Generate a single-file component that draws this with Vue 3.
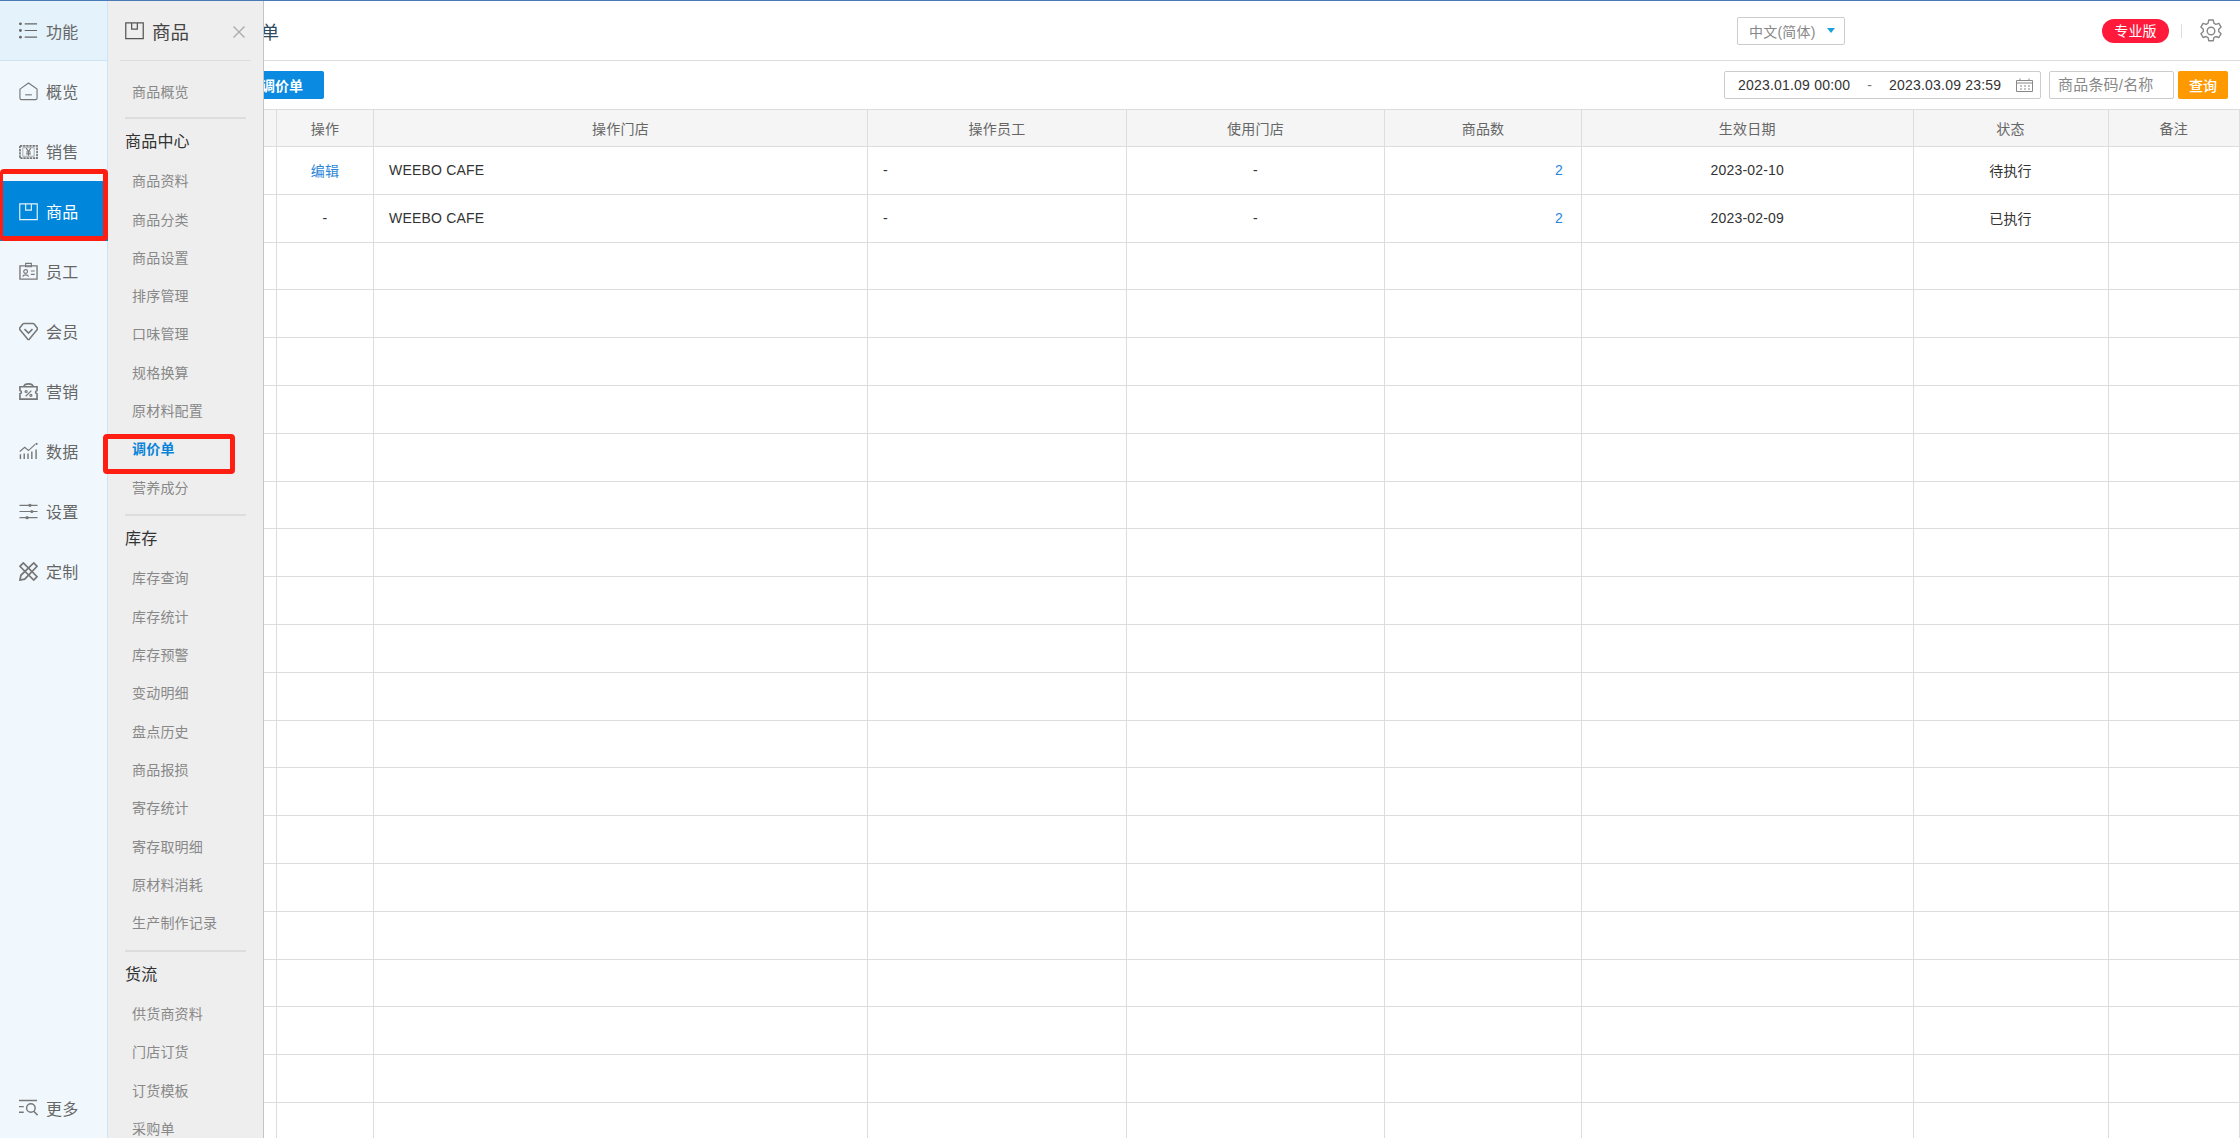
<script setup>
const navItems = [
  { label: '概览', icon: 'home' },
  { label: '销售', icon: 'money' },
  { label: '商品', icon: 'box', active: true },
  { label: '员工', icon: 'card' },
  { label: '会员', icon: 'gem' },
  { label: '营销', icon: 'ticket' },
  { label: '数据', icon: 'chart' },
  { label: '设置', icon: 'sliders' },
  { label: '定制', icon: 'tools' },
]
const sections = [
  { items: ['商品概览'] },
  { title: '商品中心', items: ['商品资料', '商品分类', '商品设置', '排序管理', '口味管理', '规格换算', '原材料配置', '调价单', '营养成分'] },
  { title: '库存', items: ['库存查询', '库存统计', '库存预警', '变动明细', '盘点历史', '商品报损', '寄存统计', '寄存取明细', '原材料消耗', '生产制作记录'] },
  { title: '货流', items: ['供货商资料', '门店订货', '订货模板', '采购单'] },
]
const headers = ['', '操作', '操作门店', '操作员工', '使用门店', '商品数', '生效日期', '状态', '备注']
const rows = [
  { op: '编辑', link: true, store: 'WEEBO CAFE', staff: '-', use: '-', num: '2', date: '2023-02-10', state: '待执行' },
  { op: '-', store: 'WEEBO CAFE', staff: '-', use: '-', num: '2', date: '2023-02-09', state: '已执行' },
]
const emptyRows = Array.from({ length: 19 }, (_, i) => i)
</script>

<template>
  <div class="page">
    <aside class="side">
      <div class="side-head">
        <svg class="ico" viewBox="0 0 20 20"><g fill="#666"><circle cx="1.5" cy="3" r="1.5"/><circle cx="1.5" cy="10" r="1.5"/><circle cx="1.5" cy="17" r="1.5"/></g><path d="M6 3h13M6 10h13M6 17h13" stroke="#666" stroke-width="1.3" fill="none"/></svg>
        <span>功能</span>
      </div>
      <div v-for="n in navItems" :key="n.label" class="nav" :class="{ on: n.active }">
        <svg class="ico" viewBox="0 0 20 20" fill="none" stroke="currentColor" stroke-width="1.2">
          <template v-if="n.icon === 'home'"><path d="M1 7.500 10 1l9 6.500V17a1.500 1.500 0 0 1-1.500 1.500h-15A1.500 1.500 0 0 1 1 17Z"/><path d="M6.500 13.500h7"/></template>
          <template v-else-if="n.icon === 'money'"><path d="M1 4h18v13H1Z" stroke-width="1.8" stroke-dasharray="2.500 .8"/><path d="M4 6h12v9H4Z" stroke-width=".6"/><path d="M7.500 6.500 10 10l2.500-3.500M10 10v4.500M7.500 10.500h5M7.500 12.500h5"/></template>
          <template v-else-if="n.icon === 'box'"><path d="M.8 2h18.400v16.500H.8Z"/><path d="M7 2v6.500h6V2"/></template>
          <template v-else-if="n.icon === 'card'"><path d="M1 4h18v14H1Z" stroke-width="1.4"/><path d="M7 1.500h6V5H7Z"/><circle cx="7" cy="10" r="2"/><path d="M4 15.500c.5-2.500 5.500-2.500 6 0M12.500 9.500h4M12.500 13h4"/></template>
          <template v-else-if="n.icon === 'gem'"><path d="M5.500 1.500h9a2 2 0 0 1 1.500.7l3 3.800c.5.700.5 1.500 0 2.100L11 18a1.400 1.400 0 0 1-2 0L1 8.100c-.5-.6-.5-1.400 0-2.100l3-3.800a2 2 0 0 1 1.500-.7Z" stroke-width="1.6"/><path d="m5.800 7.500 4.200 4.200 4.200-4.200" stroke-width="1.600"/></template>
          <template v-else-if="n.icon === 'ticket'"><path d="M5 5C6 1 14 1 15 5M1 5h18v4c-2 .5-2 3 0 3.500V18H1v-5.500c2-.5 2-3 0-3.500Z" stroke-width="1.7"/><path d="m7 15 6-6"/><circle cx="7.500" cy="10" r="1.100"/><circle cx="12.500" cy="14" r="1.100"/></template>
          <template v-else-if="n.icon === 'chart'"><path d="M1.500 18v-5M5.500 18v-6M9.500 18v-6M13.500 18v-8M18 18V8" stroke-width="1.500"/><path d="M.8 10 6 5.500l4 3.500 7-6.500" stroke-width="1.200"/><circle cx="18.500" cy="2" r="1.100" fill="currentColor" stroke="none"/></template>
          <template v-else-if="n.icon === 'sliders'"><path d="M.5 3.500h19M.5 10h19M.5 16.500h19" stroke-width="1.300"/><g fill="currentColor" stroke="none"><circle cx="11.500" cy="3.500" r="1.700"/><circle cx="13.500" cy="10" r="1.700"/><circle cx="8.500" cy="16.500" r="1.700"/></g></template>
          <template v-else><path d="m4.500 1 14.500 14.500-3.500 3.500L1 4.500Z" stroke-width="1.800"/><path d="M15.500 1 19 4.500 6 18l-5 1 1-5Z" stroke-width="1.800"/></template>
        </svg>
        <span>{{ n.label }}</span>
      </div>
      <div class="nav more">
        <svg class="ico" viewBox="0 0 20 20" fill="none" stroke="#777" stroke-width="1.5"><path d="M0 1.500h19M0 8h5M0 14h5"/><circle cx="12.500" cy="9.500" r="4.500"/><path d="m15.500 13 4 4"/></svg>
        <span>更多</span>
      </div>
      <div class="mark mark-side"></div>
    </aside>

    <main class="main">
      <header class="top">
        <h1 class="title">调价单</h1>
        <div class="lang"><span>中文(简体)</span><i class="caret"></i></div>
        <span class="badge">专业版</span>
        <i class="vline"></i>
        <svg class="gear" viewBox="0 0 24 24" fill="none" stroke="#888" stroke-width="1.4"><path d="M9.800 1h4.400l.7 3.200 1.900 1.100 3.100-1 2.200 3.800-2.400 2.200v2.200l2.400 2.200-2.200 3.800-3.100-1-1.900 1.100-.7 3.200H9.800l-.7-3.200-1.900-1.100-3.100 1-2.200-3.800 2.400-2.200v-2.200L1.900 8.100l2.200-3.800 3.100 1 1.900-1.100Z" stroke-linejoin="round"/><circle cx="12" cy="12" r="3.800"/></svg>
      </header>

      <div class="tools">
        <button class="add">新增调价单</button>
        <div class="date">
          <span class="d1">2023.01.09 00:00</span>
          <span class="dash">-</span>
          <span class="d2">2023.03.09 23:59</span>
          <svg class="cal" viewBox="0 0 17 14" fill="none" stroke="#888"><path d="M.5 2.500h16v11H.5ZM.5 5h16" /><path d="M4 .5v2M13 .5v2M4 8h2M8 8h2M12 8h2M4 11h2M8 11h2M12 11h2"/></svg>
        </div>
        <div class="search">商品条码/名称</div>
        <button class="query">查询</button>
      </div>

      <div class="table">
        <div class="row head">
          <div v-for="(h, i) in headers" :key="i" class="cell">{{ h }}</div>
        </div>
        <div v-for="r in rows" :key="r.date" class="row">
          <div class="cell"></div>
          <div class="cell" :class="{ link: r.link }">{{ r.op }}</div>
          <div class="cell left">{{ r.store }}</div>
          <div class="cell left">{{ r.staff }}</div>
          <div class="cell">{{ r.use }}</div>
          <div class="cell right link">{{ r.num }}</div>
          <div class="cell">{{ r.date }}</div>
          <div class="cell">{{ r.state }}</div>
          <div class="cell"></div>
        </div>
        <div v-for="e in emptyRows" :key="e" class="row">
          <div v-for="c in 9" :key="c" class="cell"></div>
        </div>
      </div>
    </main>

    <section class="panel">
      <div class="panel-head">
        <svg class="ico" viewBox="0 0 20 20" fill="none" stroke="#555" stroke-width="1.3"><path d="M.8 2h18.400v16.500H.8Z"/><path d="M7 2v6.500h6V2"/></svg>
        <span>商品</span>
        <svg class="close" viewBox="0 0 12 12" fill="none" stroke="#aaa" stroke-width="1.300"><path d="m.5.5 11 11M11.500.5l-11 11"/></svg>
      </div>
      <div v-for="(s, i) in sections" :key="i" class="sec">
        <div v-if="s.title" class="sec-title">{{ s.title }}</div>
        <div v-for="it in s.items" :key="it" class="item" :class="{ cur: it === '调价单' }">{{ it }}</div>
      </div>
      <div class="mark mark-item"></div>
    </section>
  </div>
</template>

<style scoped>
.page {
  position: relative;
  display: flex;
  width: 2240px;
  height: 1138px;
  box-sizing: border-box;
  border-top: 1px solid #4a7ab5;
  overflow: hidden;
  background: #fff;
  font-family: "Liberation Sans", "Noto Sans CJK SC", sans-serif;
  font-size: 14px;
  letter-spacing: .2px;
  color: #333;
}
.side {
  position: relative;
  flex: 0 0 108px;
  box-sizing: border-box;
  display: flex;
  flex-direction: column;
  background: #f0f8fd;
  border-right: 1px solid #cfe3f1;
}
.side-head, .nav {
  display: flex;
  align-items: center;
  gap: 8px;
  padding-left: 19px;
  font-size: 16px;
  color: #666;
  flex: 0 0 auto;
  box-sizing: border-box;
  height: 60px;
}
.side-head { background: #e3f2fb; border-bottom: 1px solid #cfe3f1; }
.nav { color: #777; }
.nav span { color: #666; }
.nav.on { background: #0087dc; color: #e6f4fd; margin-right: -1px; }
.nav.on span { color: #fff; }
.more { margin-top: auto; }
.ico { width: 19px; height: 19px; flex: none; }
.mark {
  position: absolute;
  box-sizing: border-box;
  border: 5px solid #ff1e12;
  border-radius: 4px;
  pointer-events: none;
}
.mark-side { left: 0; top: 168px; width: 108px; height: 72px; border-left-width: 3px; }
.mark-item { left: -5px; top: 433px; width: 132px; height: 40px; }

.main { flex: 1; min-width: 0; display: flex; flex-direction: column; }
.top {
  height: 60px;
  box-sizing: border-box;
  flex: none;
  display: flex;
  align-items: center;
  padding-left: 117px;
  border-bottom: 1px solid #ddd;
}
.title { margin: 0 auto 0 0; font-size: 18px; font-weight: 400; letter-spacing: 0; color: #2d4a5e; }
.lang {
  width: 108px;
  height: 28px;
  box-sizing: border-box;
  border: 1px solid #ccc;
  border-radius: 2px;
  display: flex;
  align-items: center;
  padding-left: 11px;
  color: #888;
  margin-right: 257px;
}
.caret {
  margin-left: 11px;
  border: 4px solid transparent;
  border-top: 5px solid #1ba1d8;
  border-bottom: 0;
}
.badge {
  width: 67px;
  height: 24px;
  border-radius: 12px;
  background: #ff1a3c;
  color: #fff;
  text-align: center;
  line-height: 24px;
  font-size: 14px;
}
.vline { width: 1px; height: 14px; background: #ddd; margin: 0 17px 0 12px; }
.gear { width: 24px; height: 24px; margin-right: 17px; }

.tools {
  height: 48px;
  box-sizing: border-box;
  flex: none;
  display: flex;
  align-items: center;
  padding-left: 104px;
}
.add {
  width: 112px;
  height: 28px;
  border: 0;
  border-radius: 2px;
  background: #0a8ae0;
  color: #fff;
  font: inherit;
  font-weight: 700;
  letter-spacing: 0;
  padding: 0;
  margin-right: auto;
}
.date {
  width: 317px;
  height: 28px;
  box-sizing: border-box;
  border: 1px solid #ccc;
  border-radius: 2px;
  display: flex;
  align-items: center;
  color: #333;
  padding-left: 13px;
}
.dash { margin: 0 17px; color: #777; }
.cal { width: 17px; height: 14px; margin-left: 15px; }
.search {
  width: 125px;
  height: 28px;
  box-sizing: border-box;
  margin-left: 8px;
  border: 1px solid #ccc;
  border-radius: 2px;
  padding-left: 8px;
  line-height: 26px;
  font-size: 15px;
  color: #888;
  white-space: nowrap;
}
.query {
  width: 50px;
  height: 28px;
  margin: 0 12px 0 4px;
  border: 0;
  border-radius: 2px;
  background: #ff9900;
  color: #fff;
  font: inherit;
  font-size: 14px;
  font-weight: 500;
  padding: 0;
}

.table { border-top: 1px solid #ddd; flex: 1; position: relative; }
.row {
  display: grid;
  grid-template-columns: 169px 97px 494px 259px 258px 197px 331.5px 195px 131.5px;
  height: 47.8px;
  box-sizing: border-box;
  border-bottom: 1px solid #ddd;
}
.row.head { height: 37px; background: #f5f5f5; border-bottom-width: 1px; color: #666; }
.cell {
  box-sizing: border-box;
  border-right: 1px solid #ddd;
  display: flex;
  align-items: center;
  justify-content: center;
  min-width: 0;
}
.left { justify-content: flex-start; padding-left: 15px; }
.right { justify-content: flex-end; padding-right: 18px; }
.link { color: #2a85d8; }

.panel {
  position: absolute;
  left: 108px;
  top: 0;
  bottom: 0;
  width: 156px;
  box-sizing: border-box;
  background: #eee;
  border-right: 1px solid #c4c4c4;
}
.panel-head {
  height: 60px;
  box-sizing: border-box;
  margin: 0 12px;
  padding-left: 5px;
  border-bottom: 1px solid #ddd;
  display: flex;
  align-items: center;
  gap: 8px;
  font-size: 18.5px;
  letter-spacing: 0;
  color: #444;
  position: relative;
}
.close { position: absolute; right: 6px; top: 25px; width: 12px; height: 12px; }
.sec { padding: 12px 0 6px; position: relative; }
.sec + .sec { padding: 0 0 7.5px; }
.sec + .sec::before {
  content: "";
  position: absolute;
  left: 17px;
  top: 0;
  width: 121px;
  height: 2px;
  background: #ddd;
}
.sec-title { padding: 5px 0 0 17px; height: 40px; line-height: 40px; font-size: 16px; color: #333; }
.item { height: 38.3px; line-height: 38.3px; padding-left: 24px; color: #888; }
.item.cur { color: #0a84d8; font-weight: 700; }
</style>

<style>
html, body { margin: 0; overflow: hidden; }
</style>
